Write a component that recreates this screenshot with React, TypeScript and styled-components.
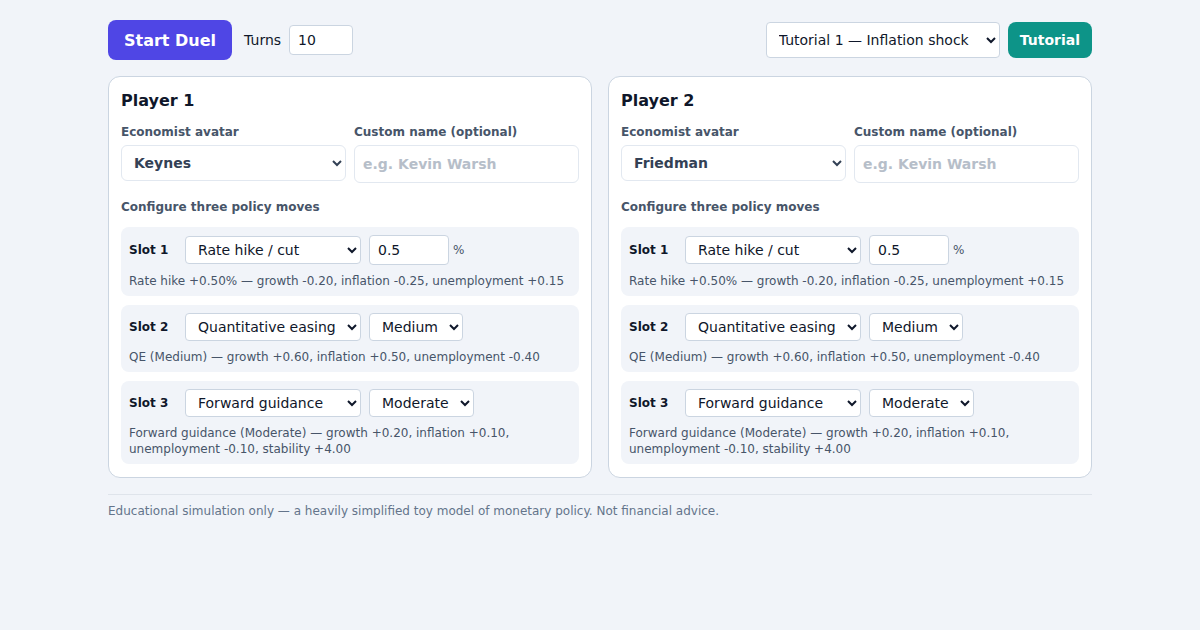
import React from "react";
import styled, { createGlobalStyle } from "styled-components";

const Global = createGlobalStyle`
  html, body { margin: 0; padding: 0; background: #f1f4f9; }
  body { font-family: "DejaVu Sans", "Noto Sans", sans-serif; color: #0f172a; }
  * { box-sizing: border-box; }
`;

const Main = styled.main`
  width: 984px;
  margin: 0 auto;
  padding-top: 20px;
`;

const Header = styled.header`
  display: flex;
  align-items: center;
  justify-content: space-between;
  height: 40px;
`;

const Group = styled.div`
  display: flex;
  align-items: center;
  gap: ${(p: { $gap: number }) => p.$gap}px;
`;

const Button = styled.button<{ $tone: "indigo" | "teal"; $h: number; $size: number; $pad: number }>`
  height: ${(p) => p.$h}px;
  padding: 0 ${(p) => p.$pad}px;
  border: none;
  border-radius: 8px;
  background: ${(p) => (p.$tone === "indigo" ? "#4f46e5" : "#0d9488")};
  color: #fff;
  font-family: "DejaVu Sans", sans-serif;
  font-weight: 700;
  font-size: ${(p) => p.$size}px;
  cursor: pointer;
`;

const TurnsLabel = styled.label`
  display: flex;
  align-items: center;
  gap: 8px;
  font-size: 14px;
  color: #0f172a;
  margin-left: 4px;
`;

const NumInput = styled.input<{ $w: number; $h: number }>`
  width: ${(p) => p.$w}px;
  height: ${(p) => p.$h}px;
  padding: 0 8px;
  border: 1px solid #cbd5e1;
  border-radius: 4px;
  background: #fff;
  font-family: "DejaVu Sans", sans-serif;
  font-size: 14px;
  color: #0f172a;
`;

const Select = styled.select<{ $w?: number; $h: number; $bold?: boolean; $soft?: boolean }>`
  width: ${(p) => (p.$w ? `${p.$w}px` : "100%")};
  height: ${(p) => p.$h}px;
  padding: 0 6px 0 8px;
  border: 1px solid ${(p) => (p.$soft ? "#e2e8f0" : "#cbd5e1")};
  border-radius: ${(p) => (p.$soft ? 6 : 4)}px;
  background: #fff;
  font-family: "DejaVu Sans", sans-serif;
  font-size: 14px;
  font-weight: ${(p) => (p.$bold ? 700 : 400)};
  color: ${(p) => (p.$bold ? "#334155" : "#0f172a")};
`;

const TextInput = styled.input`
  width: 100%;
  height: 38px;
  padding: 0 8px;
  border: 1px solid #e2e8f0;
  border-radius: 6px;
  background: #fff;
  font-family: "DejaVu Sans", sans-serif;
  font-size: 14px;
  font-weight: 700;
  color: #334155;
  &::placeholder { color: #b6bec9; }
`;

const Cards = styled.div`
  display: grid;
  grid-template-columns: 1fr 1fr;
  gap: 16px;
  margin-top: 16px;
`;

const Card = styled.section`
  background: #fff;
  border: 1px solid #cbd5e1;
  border-radius: 12px;
  padding: 14px 12px 13px;
`;

const Title = styled.h2`
  margin: 0 0 13px;
  font-size: 16px;
  line-height: 20px;
  font-weight: 700;
  color: #0f172a;
`;

const Fields = styled.div`
  display: grid;
  grid-template-columns: 1fr 1fr;
  gap: 8px;
`;

const Field = styled.label`
  display: flex;
  flex-direction: column;
  gap: 5px;
`;

const SmallLabel = styled.span`
  font-size: 12px;
  line-height: 16px;
  font-weight: 700;
  color: #475569;
`;

const SectionLabel = styled(SmallLabel)`
  display: block;
  margin: 16px 0 12px;
`;

const Slots = styled.div`
  display: flex;
  flex-direction: column;
  gap: 9px;
`;

const Slot = styled.div`
  background: #f1f4f9;
  border-radius: 8px;
  padding: 8px 8px 7px;
  display: flex;
  flex-direction: column;
  gap: 7px;
`;

const SlotRow = styled.div`
  display: flex;
  align-items: center;
  gap: 8px;
  min-height: 28px;
`;

const SlotName = styled.span`
  width: 48px;
  font-size: 12px;
  font-weight: 700;
  color: #0f172a;
`;

const Unit = styled.span`
  font-size: 12px;
  color: #475569;
  margin-left: -4px;
`;

const Desc = styled.p`
  margin: 0;
  padding-top: 1px;
  font-size: 12px;
  line-height: 16px;
  color: #475569;
`;

const Footer = styled.footer`
  margin-top: 16px;
  border-top: 1px solid #dfe4eb;
  padding-top: 8px;
  font-size: 12px;
  line-height: 16px;
  color: #64748b;
`;

type SlotData = {
  name: string;
  move: string;
  extra: { kind: "num"; value: string } | { kind: "sel"; value: string; w: number };
  desc: string;
};

const slots: SlotData[] = [
  {
    name: "Slot 1",
    move: "Rate hike / cut",
    extra: { kind: "num", value: "0.5" },
    desc: "Rate hike +0.50% — growth -0.20, inflation -0.25, unemployment +0.15",
  },
  {
    name: "Slot 2",
    move: "Quantitative easing",
    extra: { kind: "sel", value: "Medium", w: 94 },
    desc: "QE (Medium) — growth +0.60, inflation +0.50, unemployment -0.40",
  },
  {
    name: "Slot 3",
    move: "Forward guidance",
    extra: { kind: "sel", value: "Moderate", w: 105 },
    desc: "Forward guidance (Moderate) — growth +0.20, inflation +0.10, unemployment -0.10, stability +4.00",
  },
];

const moves = ["Rate hike / cut", "Quantitative easing", "Forward guidance"];

function PlayerCard({ title, avatar }: { title: string; avatar: string }) {
  return (
    <Card>
      <Title>{title}</Title>
      <Fields>
        <Field>
          <SmallLabel>Economist avatar</SmallLabel>
          <Select $h={36} $bold $soft defaultValue={avatar}>
            <option>Keynes</option>
            <option>Friedman</option>
          </Select>
        </Field>
        <Field>
          <SmallLabel>Custom name (optional)</SmallLabel>
          <TextInput placeholder="e.g. Kevin Warsh" />
        </Field>
      </Fields>
      <SectionLabel>Configure three policy moves</SectionLabel>
      <Slots>
        {slots.map((s) => (
          <Slot key={s.name}>
            <SlotRow>
              <SlotName>{s.name}</SlotName>
              <Select $w={176} $h={28} defaultValue={s.move}>
                {moves.map((m) => (
                  <option key={m}>{m}</option>
                ))}
              </Select>
              {s.extra.kind === "num" ? (
                <>
                  <NumInput $w={80} $h={30} defaultValue={s.extra.value} />
                  <Unit>%</Unit>
                </>
              ) : (
                <Select $w={s.extra.w} $h={28} defaultValue={s.extra.value}>
                  <option>{s.extra.value}</option>
                </Select>
              )}
            </SlotRow>
            <Desc>{s.desc}</Desc>
          </Slot>
        ))}
      </Slots>
    </Card>
  );
}

export default function App() {
  return (
    <>
      <Global />
      <Main>
        <Header>
          <Group $gap={8}>
            <Button $tone="indigo" $h={40} $size={16} $pad={16}>
              Start Duel
            </Button>
            <TurnsLabel>
              Turns
              <NumInput $w={64} $h={30} defaultValue="10" />
            </TurnsLabel>
          </Group>
          <Group $gap={8}>
            <Select $w={234} $h={36} defaultValue="Tutorial 1 — Inflation shock">
              <option>Tutorial 1 — Inflation shock</option>
            </Select>
            <Button $tone="teal" $h={36} $size={14} $pad={12}>
              Tutorial
            </Button>
          </Group>
        </Header>
        <Cards>
          <PlayerCard title="Player 1" avatar="Keynes" />
          <PlayerCard title="Player 2" avatar="Friedman" />
        </Cards>
        <Footer>Educational simulation only — a heavily simplified toy model of monetary policy. Not financial advice.</Footer>
      </Main>
    </>
  );
}
